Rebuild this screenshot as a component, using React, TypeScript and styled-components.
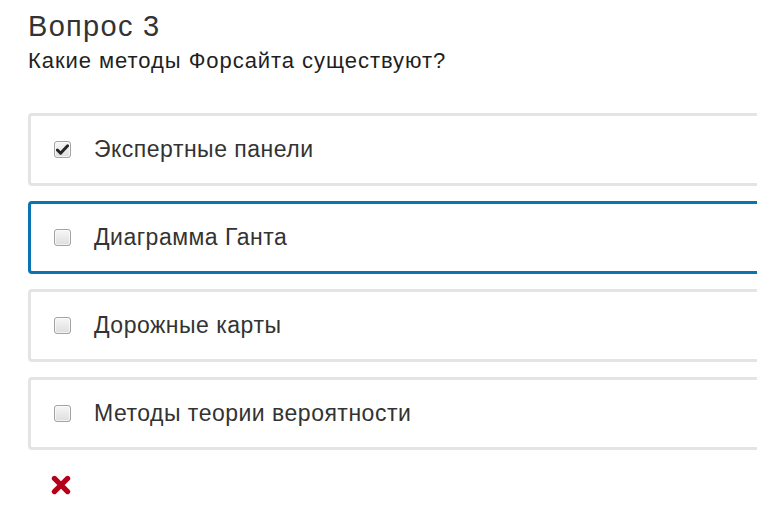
import React from 'react';
import styled, { createGlobalStyle } from 'styled-components';

const GlobalStyle = createGlobalStyle`
	html, body {
		margin: 0;
		padding: 0;
		background: #ffffff;
		overflow: hidden;
	}
	body {
		font-family: 'Liberation Sans', Arial, sans-serif;
		color: #333333;
	}
`;

interface Answer {
	id: string;
	label: string;
	checked?: boolean;
	focused?: boolean;
}

const answers: Answer[] = [
	{ id: 'a1', label: 'Экспертные панели', checked: true },
	{ id: 'a2', label: 'Диаграмма Ганта', focused: true },
	{ id: 'a3', label: 'Дорожные карты' },
	{ id: 'a4', label: 'Методы теории вероятности' },
];

export default function App() {
	return (
		<>
			<GlobalStyle />
			<Page>
				<Title>Вопрос 3</Title>
				<Prompt>Какие методы Форсайта существуют?</Prompt>
				<AnswerList>
					{answers.map((a) => (
						<AnswerCard key={a.id} focused={a.focused}>
							<Box checked={a.checked}>
								{a.checked && (
									<svg width="13" height="11" viewBox="0 0 13 11">
										<path
											d="M1.4 6 L4.6 9.2 L11.6 1.8"
											fill="none"
											stroke="#262626"
											strokeWidth="3"
											strokeLinecap="round"
											strokeLinejoin="round"
										/>
									</svg>
								)}
							</Box>
							<AnswerText>{a.label}</AnswerText>
						</AnswerCard>
					))}
				</AnswerList>
				<Result>
					<svg width="20" height="20" viewBox="0 0 20 20">
						<path
							d="M3.4 3.4 L16.6 16.6 M16.6 3.4 L3.4 16.6"
							stroke="#b5001a"
							strokeWidth="5.2"
							strokeLinecap="round"
						/>
					</svg>
				</Result>
			</Page>
		</>
	);
}

const Page = styled.div`
	padding: 9px 0 0 28px;
`;

const Title = styled.h2`
	margin: 0;
	font-size: 29px;
	font-weight: 400;
	line-height: 34px;
	letter-spacing: 1.3px;
	color: #333333;
`;

const Prompt = styled.div`
	margin-top: 4px;
	font-size: 22px;
	line-height: 28px;
	letter-spacing: 0.95px;
	color: #1f1f1f;
`;

const AnswerList = styled.div`
	display: flex;
	flex-direction: column;
	gap: 15px;
	margin-top: 38px;
`;

const AnswerCard = styled.label<{ focused?: boolean }>`
	display: flex;
	align-items: center;
	box-sizing: border-box;
	width: 800px;
	height: 73px;
	padding-left: 23px;
	border: ${({ focused }) => (focused ? '3px solid #0a74b3' : '3px solid #e4e4e4')};
	border-radius: 4px;
	background: #ffffff;
`;

const Box = styled.span<{ checked?: boolean }>`
	display: flex;
	align-items: center;
	justify-content: center;
	box-sizing: border-box;
	width: 17px;
	height: 17px;
	border: 1px solid #a3a3a3;
	border-radius: 3px;
	background: linear-gradient(#f7f7f7, #dedede);
	box-shadow: inset 0 0 0 1px rgba(255, 255, 255, 0.6);
`;

const AnswerText = styled.span`
	margin-left: 23px;
	font-size: 23px;
	letter-spacing: 0.5px;
	color: #333333;
`;

const Result = styled.div`
	display: flex;
	padding: 25px 0 0 23px;
`;
